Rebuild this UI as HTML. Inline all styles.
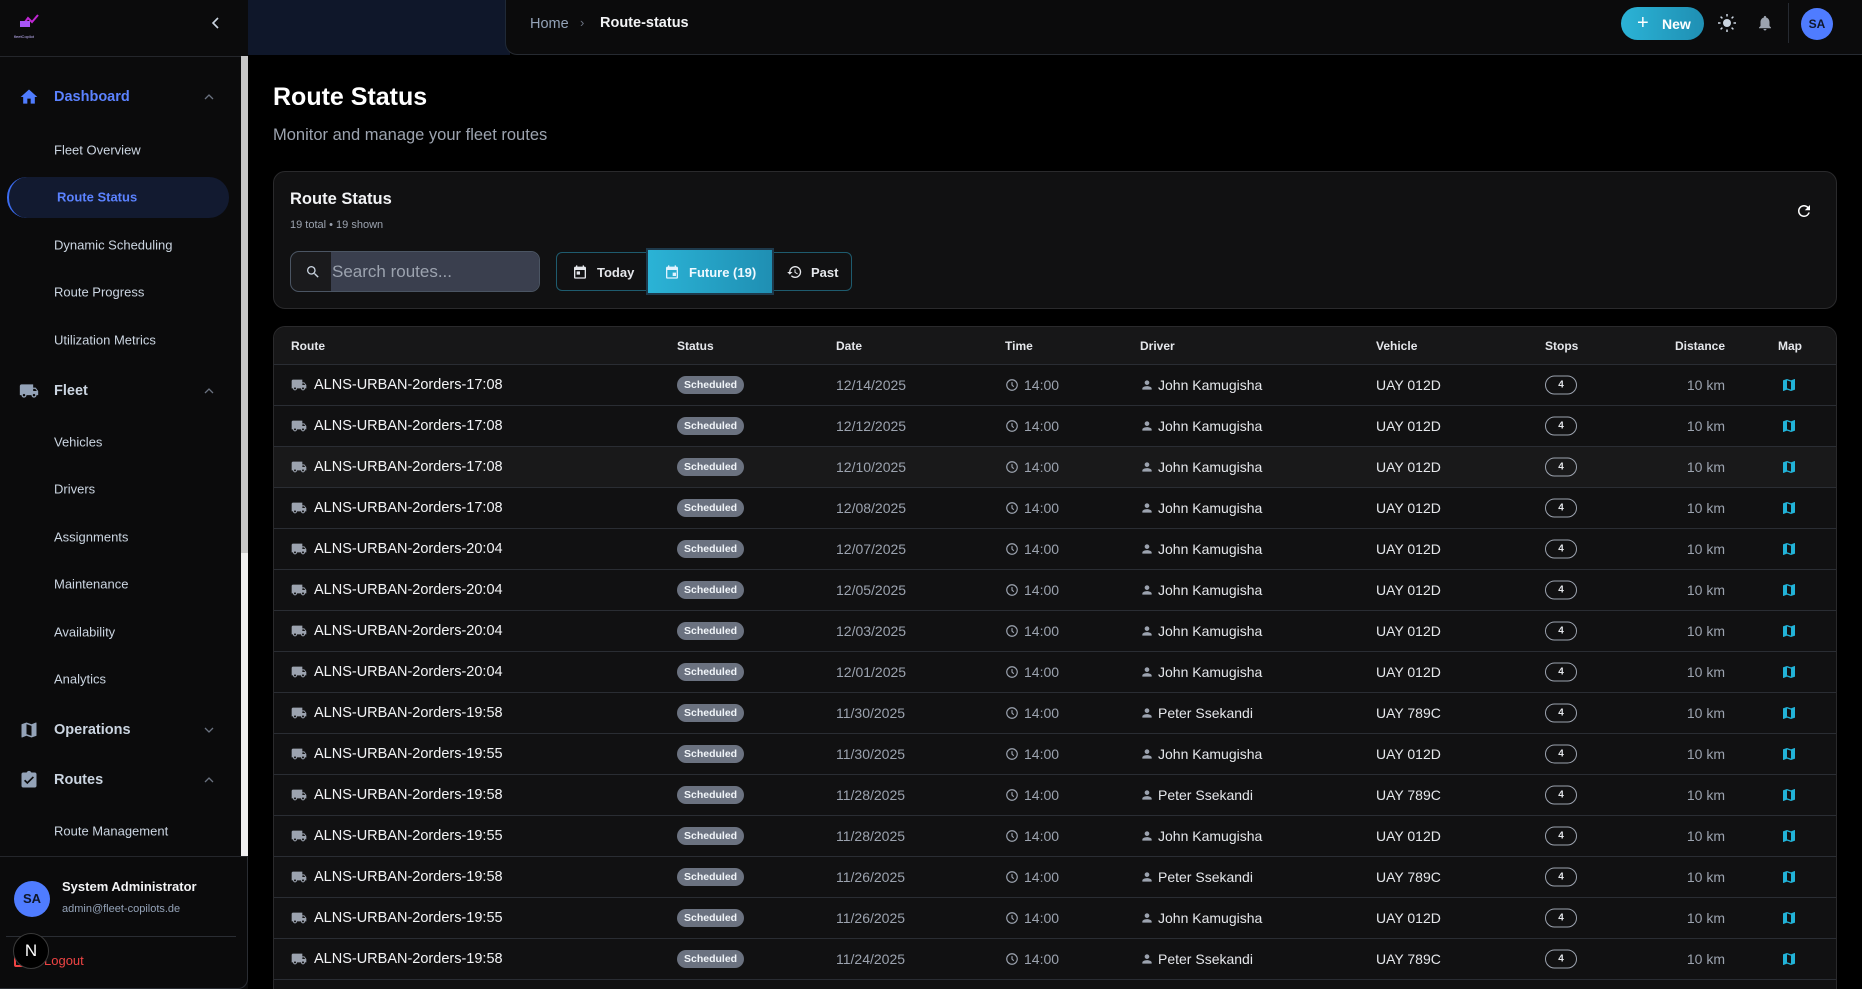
<!DOCTYPE html>
<html><head><meta charset="utf-8"><style>
*{box-sizing:border-box;margin:0;padding:0}
html{width:1862px;height:989px;overflow:hidden;background:#000}
body{width:1862px;height:989px;background:#000;font-family:"Liberation Sans",sans-serif;color:#e5e7eb;position:relative;overflow:hidden}
.a{position:absolute}
.side{left:0;top:0;width:248px;height:989px;background:#0b0b0c}
.nav{position:absolute;left:54px;font-size:13px;color:#cbd5e1;transform:translateY(-50%);white-space:nowrap}
.grp{position:absolute;left:54px;font-size:14.5px;color:#cbd5e1;font-weight:bold;transform:translateY(-50%)}
.ic{position:absolute;left:19px;width:20px;height:20px;fill:#94a3b8;transform:translateY(-50%)}
.chev{position:absolute;left:203px;width:12px;height:12px;transform:translateY(-50%)}
.row{position:absolute;left:0;width:1564px;height:41px;border-top:1px solid #2a2d33;font-size:14px}
.row>*{position:absolute;top:50%;transform:translateY(-50%);white-space:nowrap}
.tr{left:17px;width:16px;height:16px;fill:#9ca3af}
.rn{left:40px;color:#f3f4f6;font-size:14.5px}
.st{left:403px;background:#6b7280;color:#f1f5f9;font-size:10.5px;font-weight:bold;padding:3px 7px;border-radius:9px}
.dt{left:562px;color:#9ca3af}
.ck{left:731px;width:14px;height:14px}
.tm{left:750px;color:#9ca3af}
.pi{left:866px;width:14px;height:14px;fill:#9ca3af}
.dr{left:884px;color:#e5e7eb}
.vh{left:1102px;color:#e5e7eb}
.sp{left:1271px;width:32px;height:19px;border:1px solid #9ca3af;border-radius:10px;font-size:10px;font-weight:bold;text-align:center;line-height:17px;color:#e5e7eb}
.ds{right:113px;color:#9ca3af}
.mp{left:1507px;width:16px;height:16px;fill:#22b3d8}
.th{position:absolute;top:50%;transform:translateY(-50%);font-size:12px;font-weight:bold;color:#e5e7eb}
</style></head><body>
<svg width="0" height="0" style="position:absolute"><defs>
<symbol id="truck" viewBox="0 0 24 24"><path d="M20 8h-3V4H3c-1.1 0-2 .9-2 2v11h2c0 1.66 1.34 3 3 3s3-1.34 3-3h6c0 1.660 1.34 3 3 3s3-1.34 3-3h2v-5l-3-4zM6 18.5c-.83 0-1.5-.67-1.5-1.5s.67-1.5 1.5-1.5 1.5.67 1.5 1.5-.67 1.5-1.5 1.5zm13.5-9l1.96 2.5H17V9.5h2.5zm-1.5 9c-.83 0-1.5-.67-1.5-1.5s.67-1.5 1.5-1.5 1.5.67 1.5 1.5-.67 1.5-1.5 1.5z"/></symbol>
<symbol id="map" viewBox="0 0 24 24"><path d="M20.5 3l-.16.03L15 5.1 9 3 3.36 4.9c-.21.07-.36.25-.36.48V20.5c0 .28.22.5.5.5l.16-.03L9 18.9l6 2.1 5.64-1.9c.21-.07.36-.25.36-.48V3.5c0-.28-.22-.5-.5-.5zM15 19l-6-2.11V5l6 2.11V19z"/></symbol>
<symbol id="person" viewBox="0 0 24 24"><path d="M12 12c2.21 0 4-1.79 4-4s-1.79-4-4-4-4 1.79-4 4 1.79 4 4 4zm0 2c-2.67 0-8 1.34-8 4v2h16v-2c0-2.66-5.33-4-8-4z"/></symbol>
<symbol id="clock" viewBox="0 0 24 24"><circle cx="12" cy="12" r="9" fill="none" stroke="#9ca3af" stroke-width="2"/><path d="M12 7v5l3 3" fill="none" stroke="#9ca3af" stroke-width="2"/></symbol>
<symbol id="up" viewBox="0 0 12 12"><path d="M2 8l4-4 4 4" fill="none" stroke="#6b7280" stroke-width="1.3"/></symbol>
<symbol id="down" viewBox="0 0 12 12"><path d="M2 4l4 4 4-4" fill="none" stroke="#6b7280" stroke-width="1.3"/></symbol>
</defs></svg>

<div class="a side"></div>
<div class="a" style="left:14px;top:12px;width:30px;height:22px">
<svg width="30" height="20" viewBox="0 0 30 20"><path d="M8 14l6-8 4 4 6-7" stroke="#c026d3" stroke-width="2" fill="none"/><path d="M6 9h10v6H6z" fill="#a855f7"/></svg>
<div style="font-size:4px;color:#c4b5fd;margin-top:-3px">fleetCopilot</div></div>
<svg class="a" style="left:210px;top:16px" width="12" height="14" viewBox="0 0 12 14"><path d="M8 2L3 7l5 5" fill="none" stroke="#cbd5e1" stroke-width="1.6"/></svg>
<div class="a" style="left:0;top:56px;width:241px;height:1px;background:#24262b"></div>
<div class="a" style="left:241px;top:56px;width:7px;height:800px;background:#efefef"></div>
<div class="a" style="left:241px;top:56px;width:7px;height:497px;background:#c6c6c6"></div>

<svg class="ic" style="top:97px;fill:#4f7cff" viewBox="0 0 24 24"><path d="M10 20v-6h4v6h5v-8h3L12 3 2 12h3v8z"/></svg>
<div class="grp" style="top:97px;color:#5b82ff">Dashboard</div>
<svg class="chev" style="top:97px"><use href="#up"/></svg>
<div class="nav" style="top:150px">Fleet Overview</div>
<div class="a" style="left:7px;top:177px;width:222px;height:41px;border-radius:20px;background:#121a30;border-left:2px solid #3b6cf0"></div>
<div class="nav" style="top:197px;left:57px;color:#5b82ff;font-weight:bold">Route Status</div>
<div class="nav" style="top:245px">Dynamic Scheduling</div>
<div class="nav" style="top:292px">Route Progress</div>
<div class="nav" style="top:340px">Utilization Metrics</div>
<svg class="ic" style="top:391px" viewBox="0 0 24 24"><use href="#truck"/></svg>
<div class="grp" style="top:391px">Fleet</div>
<svg class="chev" style="top:391px"><use href="#up"/></svg>
<div class="nav" style="top:442px">Vehicles</div>
<div class="nav" style="top:489px">Drivers</div>
<div class="nav" style="top:537px">Assignments</div>
<div class="nav" style="top:584px">Maintenance</div>
<div class="nav" style="top:632px">Availability</div>
<div class="nav" style="top:679px">Analytics</div>
<svg class="ic" style="top:730px" viewBox="0 0 24 24"><use href="#map"/></svg>
<div class="grp" style="top:730px">Operations</div>
<svg class="chev" style="top:730px"><use href="#down"/></svg>
<svg class="ic" style="top:780px" viewBox="0 0 24 24"><path d="M19 3h-4.18C14.4 1.84 13.3 1 12 1s-2.4.84-2.82 2H5c-1.1 0-2 .9-2 2v14c0 1.1.9 2 2 2h14c1.1 0 2-.9 2-2V5c0-1.1-.9-2-2-2zm-9 14l-4-4 1.41-1.41L10 14.170l6.59-6.59L18 9l-8 8z"/></svg>
<div class="grp" style="top:780px">Routes</div>
<svg class="chev" style="top:780px"><use href="#up"/></svg>
<div class="nav" style="top:831px">Route Management</div>

<div class="a" style="left:0;top:856px;width:248px;height:133px;background:#0b0b0c;border-right:1px solid #2a2d33;border-bottom:1px solid #2a2d33;border-top:1px solid #24262b;border-bottom-right-radius:10px"></div>
<div class="a" style="left:14px;top:881px;width:36px;height:36px;border-radius:50%;background:#4f7cff;color:#0f172a;font-weight:bold;font-size:13px;text-align:center;line-height:36px">SA</div>
<div class="a" style="left:62px;top:879px;font-size:13px;font-weight:bold;color:#f3f4f6">System Administrator</div>
<div class="a" style="left:62px;top:903px;font-size:11px;color:#94a3b8">admin@fleet-copilots.de</div>
<div class="a" style="left:6px;top:936px;width:230px;height:1px;background:#2a2d33"></div>
<div class="a" style="left:14px;top:953px;width:14px;height:14px;border:2px solid #ef4444;border-radius:2px"></div>
<div class="a" style="left:44px;top:953px;font-size:13px;color:#ef4444">Logout</div>
<div class="a" style="left:13px;top:933px;width:36px;height:36px;border-radius:50%;background:#000;border:1px solid #3a3a3a;color:#fff;font-size:17px;text-align:center;line-height:34px">N</div>

<div class="a" style="left:248px;top:0;width:262px;height:55px;background:#0f172a"></div>
<div class="a" style="left:505px;top:0;width:1357px;height:55px;background:#0b0b0c;border-left:1px solid #1f2937;border-bottom:1px solid #262a31;border-bottom-left-radius:12px"></div>
<div class="a" style="left:530px;top:16px;font-size:14.5px;color:#94a3b8">Home</div>
<div class="a" style="left:580px;top:15px;font-size:13px;color:#6b7280">›</div>
<div class="a" style="left:600px;top:15px;font-size:14.5px;color:#f3f4f6;font-weight:bold">Route-status</div>
<div class="a" style="left:1621px;top:7px;width:83px;height:33px;border-radius:17px;background:linear-gradient(90deg,#2bb3d6,#1f8fb3);color:#fff;font-weight:bold;font-size:14px;line-height:33px"><span style="position:absolute;left:16px;font-size:20px;font-weight:normal;top:0">+</span><span style="position:absolute;left:41px;top:1px">New</span></div>
<svg class="a" style="left:1717px;top:13px" width="20" height="20" viewBox="0 0 20 20"><circle cx="10" cy="10" r="4" fill="#cbd5e1"/><g stroke="#cbd5e1" stroke-width="1.5"><path d="M10 1v2.5M10 16.5V19M1 10h2.5M16.5 10H19M3.6 3.6l1.8 1.8M14.6 14.6l1.8 1.8M3.6 16.4l1.8-1.8M14.6 5.4l1.8-1.8"/></g></svg>
<svg class="a" style="left:1756px;top:13px" width="18" height="20" viewBox="0 0 24 24"><path fill="#9ca3af" d="M12 22c1.1 0 2-.9 2-2h-4c0 1.1.9 2 2 2zm6-6v-5c0-3.07-1.64-5.64-4.5-6.32V4c0-.83-.67-1.5-1.5-1.5s-1.5.67-1.5 1.5v.68C7.63 5.36 6 7.920 6 11v5l-2 2v1h16v-1l-2-2z"/></svg>
<div class="a" style="left:1788px;top:3px;width:1px;height:40px;background:#262a31"></div>
<div class="a" style="left:1801px;top:8px;width:32px;height:32px;border-radius:50%;background:#4f7cff;color:#0f172a;font-weight:bold;font-size:12px;text-align:center;line-height:32px">SA</div>

<div class="a" style="left:273px;top:83px;font-size:25px;font-weight:bold;color:#fff">Route Status</div>
<div class="a" style="left:273px;top:126px;font-size:16.5px;color:#9ca3af">Monitor and manage your fleet routes</div>

<div class="a" style="left:273px;top:171px;width:1564px;height:138px;background:#111112;border:1px solid #2a2a2c;border-radius:12px"></div>
<div class="a" style="left:290px;top:190px;font-size:16.5px;font-weight:bold;color:#f3f4f6">Route Status</div>
<div class="a" style="left:290px;top:219px;font-size:11px;color:#9ca3af">19 total • 19 shown</div>
<svg class="a" style="left:1795px;top:202px" width="18" height="18" viewBox="0 0 24 24"><path fill="#fff" d="M17.65 6.35A7.958 7.958 0 0012 4c-4.42 0-7.99 3.58-7.99 8s3.57 8 7.99 8c3.73 0 6.84-2.55 7.73-6h-2.08A5.99 5.99 0 0112 18c-3.31 0-6-2.69-6-6s2.69-6 6-6c1.66 0 3.14.69 4.22 1.78L13 11h7V4l-2.35 2.35z"/></svg>
<div class="a" style="left:290px;top:251px;width:250px;height:41px;border:1px solid #4b5563;border-radius:9px;background:#1a1a1c;overflow:hidden">
<div style="position:absolute;left:40px;top:0;width:210px;height:41px;background:#3a3f4e"></div>
<svg style="position:absolute;left:14px;top:12px" width="16" height="16" viewBox="0 0 24 24"><path fill="#cbd5e1" d="M15.5 14h-.79l-.28-.27A6.47 6.47 0 0016 9.5 6.5 6.5 0 109.5 16c1.61 0 3.09-.59 4.23-1.57l.27.28v.79l5 4.99L20.49 19l-4.990-5zm-6 0C7.01 14 5 11.99 5 9.5S7.01 5 9.5 5 14 7.01 14 9.5 11.99 14 9.5 14z"/></svg>
<div style="position:absolute;left:41px;top:10px;font-size:17px;color:#9ca3af">Search routes...</div></div>
<div class="a" style="left:556px;top:252px;width:296px;height:39px;border:1px solid #1e5b6e;border-radius:6px"></div>
<svg class="a" style="left:572px;top:264px" width="16" height="16" viewBox="0 0 24 24"><path fill="#e5e7eb" d="M19 4h-1V2h-2v2H8V2H6v2H5c-1.1 0-2 .9-2 2v14c0 1.1.9 2 2 2h14c1.1 0 2-.9 2-2V6c0-1.1-.9-2-2-2zm0 16H5V9h14v11zM7 11h5v5H7z"/></svg>
<div class="a" style="left:597px;top:265px;font-size:13px;font-weight:bold;color:#e5e7eb">Today</div>
<div class="a" style="left:646px;top:248px;width:128px;height:47px;border:2px solid #1e3a4c"></div>
<div class="a" style="left:648px;top:250px;width:124px;height:43px;background:linear-gradient(90deg,#2bb3d6,#1f8fb3)"></div>
<svg class="a" style="left:664px;top:264px" width="16" height="16" viewBox="0 0 24 24"><path fill="#e0f2fe" d="M19 4h-1V2h-2v2H8V2H6v2H5c-1.1 0-2 .9-2 2v14c0 1.1.9 2 2 2h14c1.1 0 2-.9 2-2V6c0-1.1-.9-2-2-2zm0 16H5V9h14v11zm-6-7h5v5h-5z"/></svg>
<div class="a" style="left:689px;top:265px;font-size:13px;font-weight:bold;color:#f0f9ff">Future (19)</div>
<svg class="a" style="left:786px;top:264px" width="17" height="16" viewBox="0 0 24 24"><path fill="#e5e7eb" d="M13 3a9 9 0 00-9 9H1l3.89 3.89.07.14L9 12H6c0-3.87 3.13-7 7-7s7 3.13 7 7-3.13 7-7 7c-1.93 0-3.68-.79-4.94-2.06l-1.42 1.42A8.954 8.954 0 0013 21a9 9 0 000-18zm-1 5v5l4.28 2.54.72-1.21-3.5-2.08V8H12z"/></svg>
<div class="a" style="left:811px;top:265px;font-size:13px;font-weight:bold;color:#e5e7eb">Past</div>

<div class="a" style="left:273px;top:326px;width:1564px;height:663px;background:#111112;border:1px solid #2a2a2c;border-bottom:none;border-radius:12px 12px 0 0;overflow:hidden">
<div class="a" style="left:0;top:0;width:1564px;height:37px;background:#171718">
<div class="th" style="left:17px">Route</div><div class="th" style="left:403px">Status</div><div class="th" style="left:562px">Date</div><div class="th" style="left:731px">Time</div><div class="th" style="left:866px">Driver</div><div class="th" style="left:1102px">Vehicle</div><div class="th" style="left:1271px">Stops</div><div class="th" style="right:113px">Distance</div><div class="th" style="left:1504px">Map</div>
</div>
<div class="row" style="top:37px"><svg class="tr"><use href="#truck"/></svg><span class="rn">ALNS-URBAN-2orders-17:08</span><span class="st">Scheduled</span><span class="dt">12/14/2025</span><svg class="ck"><use href="#clock"/></svg><span class="tm">14:00</span><svg class="pi"><use href="#person"/></svg><span class="dr">John Kamugisha</span><span class="vh">UAY 012D</span><span class="sp">4</span><span class="ds">10 km</span><svg class="mp"><use href="#map"/></svg></div>
<div class="row" style="top:78px"><svg class="tr"><use href="#truck"/></svg><span class="rn">ALNS-URBAN-2orders-17:08</span><span class="st">Scheduled</span><span class="dt">12/12/2025</span><svg class="ck"><use href="#clock"/></svg><span class="tm">14:00</span><svg class="pi"><use href="#person"/></svg><span class="dr">John Kamugisha</span><span class="vh">UAY 012D</span><span class="sp">4</span><span class="ds">10 km</span><svg class="mp"><use href="#map"/></svg></div>
<div class="row" style="top:119px;background:#19191a"><svg class="tr"><use href="#truck"/></svg><span class="rn">ALNS-URBAN-2orders-17:08</span><span class="st">Scheduled</span><span class="dt">12/10/2025</span><svg class="ck"><use href="#clock"/></svg><span class="tm">14:00</span><svg class="pi"><use href="#person"/></svg><span class="dr">John Kamugisha</span><span class="vh">UAY 012D</span><span class="sp">4</span><span class="ds">10 km</span><svg class="mp"><use href="#map"/></svg></div>
<div class="row" style="top:160px"><svg class="tr"><use href="#truck"/></svg><span class="rn">ALNS-URBAN-2orders-17:08</span><span class="st">Scheduled</span><span class="dt">12/08/2025</span><svg class="ck"><use href="#clock"/></svg><span class="tm">14:00</span><svg class="pi"><use href="#person"/></svg><span class="dr">John Kamugisha</span><span class="vh">UAY 012D</span><span class="sp">4</span><span class="ds">10 km</span><svg class="mp"><use href="#map"/></svg></div>
<div class="row" style="top:201px"><svg class="tr"><use href="#truck"/></svg><span class="rn">ALNS-URBAN-2orders-20:04</span><span class="st">Scheduled</span><span class="dt">12/07/2025</span><svg class="ck"><use href="#clock"/></svg><span class="tm">14:00</span><svg class="pi"><use href="#person"/></svg><span class="dr">John Kamugisha</span><span class="vh">UAY 012D</span><span class="sp">4</span><span class="ds">10 km</span><svg class="mp"><use href="#map"/></svg></div>
<div class="row" style="top:242px"><svg class="tr"><use href="#truck"/></svg><span class="rn">ALNS-URBAN-2orders-20:04</span><span class="st">Scheduled</span><span class="dt">12/05/2025</span><svg class="ck"><use href="#clock"/></svg><span class="tm">14:00</span><svg class="pi"><use href="#person"/></svg><span class="dr">John Kamugisha</span><span class="vh">UAY 012D</span><span class="sp">4</span><span class="ds">10 km</span><svg class="mp"><use href="#map"/></svg></div>
<div class="row" style="top:283px"><svg class="tr"><use href="#truck"/></svg><span class="rn">ALNS-URBAN-2orders-20:04</span><span class="st">Scheduled</span><span class="dt">12/03/2025</span><svg class="ck"><use href="#clock"/></svg><span class="tm">14:00</span><svg class="pi"><use href="#person"/></svg><span class="dr">John Kamugisha</span><span class="vh">UAY 012D</span><span class="sp">4</span><span class="ds">10 km</span><svg class="mp"><use href="#map"/></svg></div>
<div class="row" style="top:324px"><svg class="tr"><use href="#truck"/></svg><span class="rn">ALNS-URBAN-2orders-20:04</span><span class="st">Scheduled</span><span class="dt">12/01/2025</span><svg class="ck"><use href="#clock"/></svg><span class="tm">14:00</span><svg class="pi"><use href="#person"/></svg><span class="dr">John Kamugisha</span><span class="vh">UAY 012D</span><span class="sp">4</span><span class="ds">10 km</span><svg class="mp"><use href="#map"/></svg></div>
<div class="row" style="top:365px"><svg class="tr"><use href="#truck"/></svg><span class="rn">ALNS-URBAN-2orders-19:58</span><span class="st">Scheduled</span><span class="dt">11/30/2025</span><svg class="ck"><use href="#clock"/></svg><span class="tm">14:00</span><svg class="pi"><use href="#person"/></svg><span class="dr">Peter Ssekandi</span><span class="vh">UAY 789C</span><span class="sp">4</span><span class="ds">10 km</span><svg class="mp"><use href="#map"/></svg></div>
<div class="row" style="top:406px"><svg class="tr"><use href="#truck"/></svg><span class="rn">ALNS-URBAN-2orders-19:55</span><span class="st">Scheduled</span><span class="dt">11/30/2025</span><svg class="ck"><use href="#clock"/></svg><span class="tm">14:00</span><svg class="pi"><use href="#person"/></svg><span class="dr">John Kamugisha</span><span class="vh">UAY 012D</span><span class="sp">4</span><span class="ds">10 km</span><svg class="mp"><use href="#map"/></svg></div>
<div class="row" style="top:447px"><svg class="tr"><use href="#truck"/></svg><span class="rn">ALNS-URBAN-2orders-19:58</span><span class="st">Scheduled</span><span class="dt">11/28/2025</span><svg class="ck"><use href="#clock"/></svg><span class="tm">14:00</span><svg class="pi"><use href="#person"/></svg><span class="dr">Peter Ssekandi</span><span class="vh">UAY 789C</span><span class="sp">4</span><span class="ds">10 km</span><svg class="mp"><use href="#map"/></svg></div>
<div class="row" style="top:488px"><svg class="tr"><use href="#truck"/></svg><span class="rn">ALNS-URBAN-2orders-19:55</span><span class="st">Scheduled</span><span class="dt">11/28/2025</span><svg class="ck"><use href="#clock"/></svg><span class="tm">14:00</span><svg class="pi"><use href="#person"/></svg><span class="dr">John Kamugisha</span><span class="vh">UAY 012D</span><span class="sp">4</span><span class="ds">10 km</span><svg class="mp"><use href="#map"/></svg></div>
<div class="row" style="top:529px"><svg class="tr"><use href="#truck"/></svg><span class="rn">ALNS-URBAN-2orders-19:58</span><span class="st">Scheduled</span><span class="dt">11/26/2025</span><svg class="ck"><use href="#clock"/></svg><span class="tm">14:00</span><svg class="pi"><use href="#person"/></svg><span class="dr">Peter Ssekandi</span><span class="vh">UAY 789C</span><span class="sp">4</span><span class="ds">10 km</span><svg class="mp"><use href="#map"/></svg></div>
<div class="row" style="top:570px"><svg class="tr"><use href="#truck"/></svg><span class="rn">ALNS-URBAN-2orders-19:55</span><span class="st">Scheduled</span><span class="dt">11/26/2025</span><svg class="ck"><use href="#clock"/></svg><span class="tm">14:00</span><svg class="pi"><use href="#person"/></svg><span class="dr">John Kamugisha</span><span class="vh">UAY 012D</span><span class="sp">4</span><span class="ds">10 km</span><svg class="mp"><use href="#map"/></svg></div>
<div class="row" style="top:611px"><svg class="tr"><use href="#truck"/></svg><span class="rn">ALNS-URBAN-2orders-19:58</span><span class="st">Scheduled</span><span class="dt">11/24/2025</span><svg class="ck"><use href="#clock"/></svg><span class="tm">14:00</span><svg class="pi"><use href="#person"/></svg><span class="dr">Peter Ssekandi</span><span class="vh">UAY 789C</span><span class="sp">4</span><span class="ds">10 km</span><svg class="mp"><use href="#map"/></svg></div>
<div class="row" style="top:652px"></div>
</div>
</body></html>
